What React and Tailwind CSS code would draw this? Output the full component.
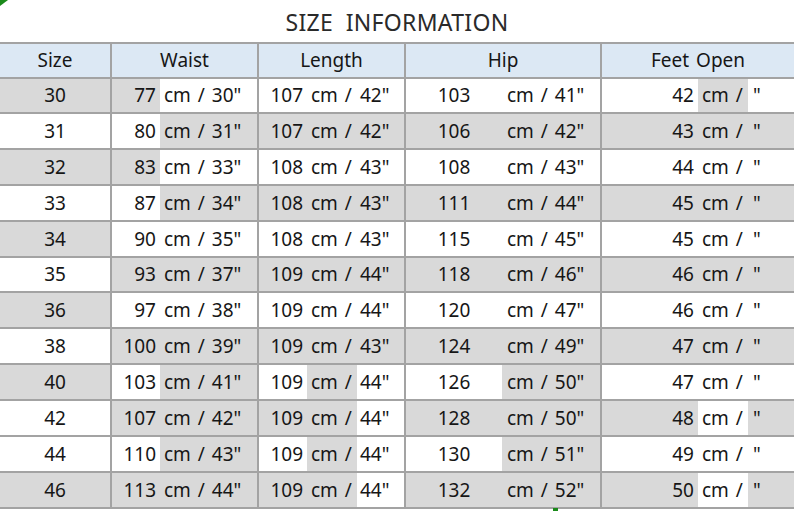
const rows = [
  { s: '30', w: ['77', 'cm / 30"'], l: ['107', 'cm /', '42"'], h: ['103', 'cm / 41"'], f: ['42', 'cm /', '"'], bg: 'ggwwwwwwwgw' },
  { s: '31', w: ['80', 'cm / 31"'], l: ['107', 'cm /', '42"'], h: ['106', 'cm / 42"'], f: ['43', 'cm /', '"'], bg: 'wwggggggggg' },
  { s: '32', w: ['83', 'cm / 33"'], l: ['108', 'cm /', '43"'], h: ['108', 'cm / 43"'], f: ['44', 'cm /', '"'], bg: 'ggwwwwwwwww' },
  { s: '33', w: ['87', 'cm / 34"'], l: ['108', 'cm /', '43"'], h: ['111', 'cm / 44"'], f: ['45', 'cm /', '"'], bg: 'wwggggggggg' },
  { s: '34', w: ['90', 'cm / 35"'], l: ['108', 'cm /', '43"'], h: ['115', 'cm / 45"'], f: ['45', 'cm /', '"'], bg: 'gwwwwwwwwww' },
  { s: '35', w: ['93', 'cm / 37"'], l: ['109', 'cm /', '44"'], h: ['118', 'cm / 46"'], f: ['46', 'cm /', '"'], bg: 'wgggggggggg' },
  { s: '36', w: ['97', 'cm / 38"'], l: ['109', 'cm /', '44"'], h: ['120', 'cm / 47"'], f: ['46', 'cm /', '"'], bg: 'gwwwwwwwwww' },
  { s: '38', w: ['100', 'cm / 39"'], l: ['109', 'cm /', '43"'], h: ['124', 'cm / 49"'], f: ['47', 'cm /', '"'], bg: 'wgggggggggg' },
  { s: '40', w: ['103', 'cm / 41"'], l: ['109', 'cm /', '44"'], h: ['126', 'cm / 50"'], f: ['47', 'cm /', '"'], bg: 'gwgwgwwgwww' },
  { s: '42', w: ['107', 'cm / 42"'], l: ['109', 'cm /', '44"'], h: ['128', 'cm / 50"'], f: ['48', 'cm /', '"'], bg: 'wggggwgggwg' },
  { s: '44', w: ['110', 'cm / 43"'], l: ['109', 'cm /', '44"'], h: ['130', 'cm / 51"'], f: ['49', 'cm /', '"'], bg: 'wwgwgwwgwww' },
  { s: '46', w: ['113', 'cm / 44"'], l: ['109', 'cm /', '44"'], h: ['132', 'cm / 52"'], f: ['50', 'cm /', '"'], bg: 'gggggwgggwg' },
]

// g = grey fill, w = white fill; order: size, waist(2), length(3), hip(2), feet(3)
const shade = c => (c === 'g' ? 'bg-[#d9d9d9]' : 'bg-white')

function Row({ r, tall }) {
  const b = r.bg
  return (
    <div className={`flex border-b-2 border-[#a3a3a3] ${tall ? 'h-[36px]' : 'h-[35px]'}`}>
      <div className={`w-[112px] shrink-0 border-r-2 border-[#a3a3a3] flex items-center justify-center ${shade(b[0])}`}>{r.s}</div>
      <div className="w-[147px] shrink-0 flex border-r-2 border-[#a3a3a3]">
        <div className={`w-[48px] flex items-center justify-end pr-[4px] ${shade(b[1])}`}>{r.w[0]}</div>
        <div className={`flex-1 flex items-center pl-[4px] ${shade(b[2])}`}>{r.w[1]}</div>
      </div>
      <div className="w-[147px] shrink-0 flex border-r-2 border-[#a3a3a3]">
        <div className={`w-[48px] flex items-center justify-end pr-[4px] ${shade(b[3])}`}>{r.l[0]}</div>
        <div className={`w-[50px] flex items-center pl-[4px] ${shade(b[4])}`}>{r.l[1]}</div>
        <div className={`flex-1 flex items-center pl-[3px] ${shade(b[5])}`}>{r.l[2]}</div>
      </div>
      <div className="w-[196px] shrink-0 flex border-r-2 border-[#a3a3a3]">
        <div className={`w-[96px] flex items-center justify-center ${shade(b[6])}`}>{r.h[0]}</div>
        <div className={`flex-1 flex items-center pl-[5px] ${shade(b[7])}`}>{r.h[1]}</div>
      </div>
      <div className="flex-1 flex">
        <div className={`w-[96px] flex items-center justify-end pr-[4px] ${shade(b[8])}`}>{r.f[0]}</div>
        <div className={`w-[50px] flex items-center pl-[4px] ${shade(b[9])}`}>{r.f[1]}</div>
        <div className={`flex-1 flex items-center pl-[5px] ${shade(b[10])}`}>{r.f[2]}</div>
      </div>
    </div>
  )
}

export default function App() {
  return (
    <div className="relative w-[794px] h-[511px] overflow-hidden bg-white text-[#161616] font-['Noto_Sans',sans-serif] text-[19px] leading-none [word-spacing:2px]">
      <div className="absolute left-0 top-0 w-0 h-0 border-t-[6px] border-r-[8px] border-t-[#1a8a1a] border-r-transparent" />
      <div className="h-[42px] flex items-center justify-center pt-[2px]">
        <h1 className="text-[23px] text-[#2a2a2a] whitespace-pre tracking-[0.3px] [word-spacing:0px]">SIZE  INFORMATION</h1>
      </div>
      <div className="border-t-2 border-[#a3a3a3]">
        <div className="flex h-[35px] border-b-2 border-[#a3a3a3] bg-[#dce8f4]">
          <div className="w-[112px] shrink-0 border-r-2 border-[#a3a3a3] flex items-center justify-center">Size</div>
          <div className="w-[147px] shrink-0 border-r-2 border-[#a3a3a3] flex items-center justify-center">Waist</div>
          <div className="w-[147px] shrink-0 border-r-2 border-[#a3a3a3] flex items-center justify-center">Length</div>
          <div className="w-[196px] shrink-0 border-r-2 border-[#a3a3a3] flex items-center justify-center">Hip</div>
          <div className="flex-1 flex items-center justify-center">Feet Open</div>
        </div>
        {rows.map((r, i) => (
          <Row key={r.s} r={r} tall={i !== 0 && i !== 5} />
        ))}
      </div>
      <div className="absolute left-[553px] top-[508px] w-[5px] h-[3px] bg-[#1a8a1a]" />
    </div>
  )
}
